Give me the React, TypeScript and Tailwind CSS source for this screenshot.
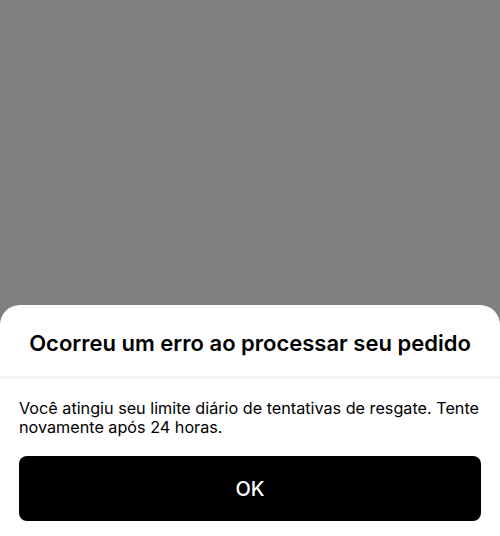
import React from "react";

export default function App() {
  return (
    <div
      className="flex h-[536px] w-[500px] flex-col justify-end bg-[#808080]"
      style={{ fontFamily: "Inter, 'Noto Sans', sans-serif" }}
    >
      <div className="rounded-t-[20px] bg-white">
        <div className="flex h-[74px] items-center justify-center border-b-[3px] border-[#f3f3f3] pt-[5px]">
          <h2 className="text-[22px] font-semibold text-black">
            Ocorreu um erro ao processar seu pedido
          </h2>
        </div>
        <div className="px-[19px] pb-[15px] pt-[20px]">
          <p className="text-[16.2px] leading-[19px] text-black">
            Você atingiu seu limite diário de tentativas de resgate. Tente novamente após 24 horas.
          </p>
          <button className="mt-[19px] flex h-[65px] w-full items-center justify-center rounded-[8px] bg-black text-[20px] font-medium text-white">
            OK
          </button>
        </div>
      </div>
    </div>
  );
}
